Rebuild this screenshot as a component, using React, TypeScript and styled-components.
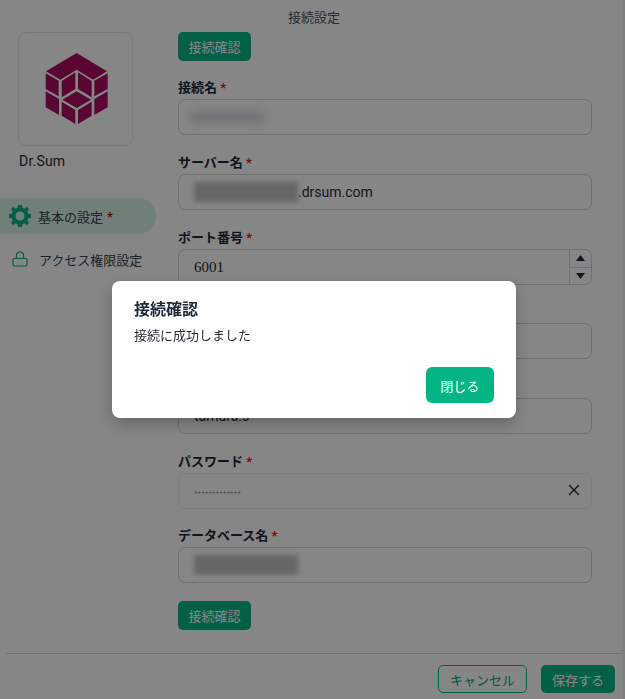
import React from "react";
import styled, { createGlobalStyle } from "styled-components";
import { X } from "lucide-react";

const Global = createGlobalStyle`
  html, body { margin: 0; padding: 0; height: 100%; overflow: hidden; background: #fdfdfd; }
  * { box-sizing: border-box; }
  body { font-family: Roboto, "Noto Sans CJK JP", sans-serif; color: #1f2937; }
`;

const Page = styled.div`
  width: 625px;
  height: 699px;
  display: flex;
  flex-direction: column;
  overflow: hidden;
  border-right: 3px solid #f0f0f2;
`;
const Title = styled.div`
  height: 32px;
  flex: none;
  padding: 9px 0 0 6px;
  text-align: center;
  font-size: 13px;
  line-height: 18px;
  color: #4b5563;
`;
const Body = styled.div`
  flex: 1;
  min-height: 0;
  display: flex;
`;
const Side = styled.aside`
  width: 178px;
  flex: none;
  display: flex;
  flex-direction: column;
`;
const LogoBox = styled.div`
  width: 115px;
  height: 114px;
  margin-left: 18px;
  border: 1px solid #e5e7eb;
  border-radius: 8px;
  display: flex;
  align-items: center;
  justify-content: center;
`;
const Product = styled.div`
  margin: 5px 0 0 19px;
  font-size: 14px;
  line-height: 20px;
  letter-spacing: 0.2px;
  color: #1f2937;
`;
const NavList = styled.nav`
  margin-top: 27px;
  display: flex;
  flex-direction: column;
  gap: 7px;
`;
const NavItem = styled.div<{ $active?: boolean }>`
  width: 156px;
  height: 36px;
  display: flex;
  align-items: center;
  padding-left: ${(p) => (p.$active ? 9 : 12)}px;
  gap: ${(p) => (p.$active ? 7 : 11)}px;
  font-size: 13px;
  color: #374151;
  white-space: nowrap;
  border-radius: 0 18px 18px 0;
  background: ${(p) => (p.$active ? "#d6f0e4" : "transparent")};
`;
const Star = styled.span`
  color: #d92020;
  font-weight: 700;
  font-size: 13px;
`;
const NavStar = styled(Star)`
  margin-left: -3px;
  color: #e00000;
`;
const Main = styled.main`
  width: 414px;
  flex: none;
  display: flex;
  flex-direction: column;
  align-items: stretch;
`;
const GreenButton = styled.button`
  width: 73px;
  height: 29px;
  padding: 0;
  border: none;
  border-radius: 5px;
  background: #03b585;
  color: #fff;
  font: 400 13px "Noto Sans CJK JP", sans-serif;
`;
const Fields = styled.div`
  margin: 20.3px 0 18px;
  display: flex;
  flex-direction: column;
  gap: 20.67px;
`;
const Label = styled.div`
  height: 18px;
  font-size: 13px;
  line-height: 13px;
  font-weight: 700;
  color: #1f2937;
`;
const Control = styled.div<{ $faint?: boolean }>`
  position: relative;
  height: 36px;
  display: flex;
  align-items: center;
  padding-left: 15px;
  border: 1px solid ${(p) => (p.$faint ? "#eceef2" : "#cfd2e0")};
  border-radius: 7px;
  font-size: 14px;
  color: #1f2937;
  overflow: hidden;
`;
const Redacted = styled.span<{ $w: number }>`
  display: inline-block;
  width: ${(p) => p.$w}px;
  height: 20px;
  background: #c2c3c5;
  filter: blur(2px);
`;
const FaintRedacted = styled.span`
  display: inline-block;
  width: 75px;
  height: 12px;
  margin-left: -4px;
  background: #d8d9dc;
  filter: blur(4px);
`;
const Mono = styled.span`
  font-family: "Liberation Serif", serif;
  font-size: 15px;
  padding-top: 2px;
`;
const Dots = styled.span`
  font-family: "Liberation Mono", monospace;
  font-size: 6px;
  color: #777;
  padding-top: 3px;
`;
const Stepper = styled.div`
  position: absolute;
  top: 0;
  right: 0;
  bottom: 0;
  width: 22px;
  display: grid;
  grid-template-rows: 1fr 1fr;
  border-left: 1px solid #cfd2e0;
`;
const StepCell = styled.div`
  display: flex;
  align-items: center;
  justify-content: center;
  & + & { border-top: 1px solid #cfd2e0; }
`;
const Clear = styled.span`
  position: absolute;
  right: 8px;
  top: 7px;
  display: flex;
  color: #1f2937;
`;
const Footer = styled.footer`
  flex: none;
  margin: 0 0 0 6px;
  height: 46px;
  border-top: 1px solid #d4d4d8;
  display: flex;
  justify-content: flex-end;
  align-items: flex-start;
  gap: 14px;
  padding: 11px 7px 0 0;
`;
const OutlineButton = styled.button`
  width: 89px;
  height: 28px;
  padding: 0;
  background: transparent;
  border: 1px solid #03b585;
  border-radius: 5px;
  color: #03a57a;
  font: 400 13px "Noto Sans CJK JP", sans-serif;
`;
const SaveButton = styled(GreenButton)`
  width: 74px;
  height: 28px;
`;
const Overlay = styled.div`
  position: fixed;
  inset: 0;
  padding-left: 3px;
  display: flex;
  align-items: center;
  justify-content: center;
  background: rgba(0, 0, 0, 0.47);
`;
const Dialog = styled.div`
  width: 404px;
  height: 137px;
  background: #fff;
  border-radius: 8px;
  box-shadow: 0 6px 16px rgba(0, 0, 0, 0.25);
  padding: 17px 22px 15px;
  display: flex;
  flex-direction: column;
`;
const DialogTitle = styled.div`
  font-size: 16px;
  line-height: 24px;
  font-weight: 700;
  color: #1f2937;
`;
const DialogText = styled.div`
  margin-top: 4px;
  font-size: 13px;
  line-height: 20px;
  color: #1f2937;
`;
const DialogActions = styled.div`
  margin-top: auto;
  display: flex;
  justify-content: flex-end;
`;
const CloseButton = styled.button`
  width: 68px;
  height: 36px;
  padding: 0;
  border: none;
  border-radius: 6px;
  background: #03b585;
  color: #fff;
  font: 400 13px "Noto Sans CJK JP", sans-serif;
`;

const Logo = () => (
  <svg width="90" height="100" viewBox="0 0 270 300" fill="#ad0c5f">
    <polygon points="137,42 228,97 186,122 137,92 88,122 45,97" />
    <polygon points="44,103 83,125 83,172 44,150" />
    <polygon points="44,157 84,180 84,228 44,205" />
    <polygon points="92,126 133,100 133,150 92,175" />
    <polygon points="141,100 182,126 182,175 141,150" />
    <polygon points="190,125 230,103 230,150 190,172" />
    <polygon points="190,180 230,157 230,205 190,228" />
    <polygon points="137,157 180,182 137,207 94,182" />
    <polygon points="92,188 133,213 133,255 92,230" />
    <polygon points="141,213 182,188 182,230 141,255" />
  </svg>
);

const Gear = () => (
  <svg width="22" height="22" viewBox="0 0 22 22" fill="#03b585">
    <path fillRule="evenodd" d="M9 0h4l.5 3 1.9.8L17.9 2l2.1 2.1-1.8 2.5.8 1.9 3 .5v4l-3 .5-.8 1.9 1.8 2.5-2.1 2.1-2.5-1.8-1.9.8-.5 3H9l-.5-3-1.9-.8L4.1 20 2 17.9l1.8-2.5-.8-1.9-3-.5v-4l3-.5.8-1.9L2 4.1 4.1 2l2.5 1.8 1.9-.8L9 0zm2 6.5a4.5 4.5 0 1 0 0 9 4.5 4.5 0 0 0 0-9z" />
  </svg>
);

const LockIcon = () => (
  <svg width="16" height="16" viewBox="0 0 16 16" fill="none" stroke="#03b585" strokeWidth="1.2">
    <rect x="1" y="7.5" width="14" height="7.5" rx="1.5" />
    <path d="M4.5 7.5V4.5a3.5 3.5 0 0 1 7 0v3" />
  </svg>
);

const Up = () => (
  <svg width="9" height="6" viewBox="0 0 9 6" fill="#1f2937"><polygon points="4.5,0 9,6 0,6" /></svg>
);
const Down = () => (
  <svg width="9" height="6" viewBox="0 0 9 6" fill="#1f2937"><polygon points="0,0 9,0 4.5,6" /></svg>
);

const Req = () => <Star> *</Star>;

export default function App() {
  return (
    <>
      <Global />
      <Page>
        <Title>接続設定</Title>
        <Body>
          <Side>
            <LogoBox><Logo /></LogoBox>
            <Product>Dr.Sum</Product>
            <NavList>
              <NavItem $active><Gear /><span>基本の設定</span><NavStar>*</NavStar></NavItem>
              <NavItem><LockIcon /><span>アクセス権限設定</span></NavItem>
            </NavList>
          </Side>
          <Main>
            <GreenButton>接続確認</GreenButton>
            <Fields>
              <div>
                <Label>接続名<Req /></Label>
                <Control><FaintRedacted /></Control>
              </div>
              <div>
                <Label>サーバー名<Req /></Label>
                <Control><Redacted $w={104} /><span>.drsum.com</span></Control>
              </div>
              <div>
                <Label>ポート番号<Req /></Label>
                <Control>
                  <Mono>6001</Mono>
                  <Stepper><StepCell><Up /></StepCell><StepCell><Down /></StepCell></Stepper>
                </Control>
              </div>
              <div>
                <Label />
                <Control />
              </div>
              <div>
                <Label />
                <Control>tamura.s</Control>
              </div>
              <div>
                <Label>パスワード<Req /></Label>
                <Control $faint>
                  <Dots>+++++++++++++</Dots>
                  <Clear><X size={18} strokeWidth={1.8} /></Clear>
                </Control>
              </div>
              <div>
                <Label>データベース名<Req /></Label>
                <Control><Redacted $w={104} /></Control>
              </div>
            </Fields>
            <GreenButton>接続確認</GreenButton>
          </Main>
        </Body>
        <Footer>
          <OutlineButton>キャンセル</OutlineButton>
          <SaveButton>保存する</SaveButton>
        </Footer>
      </Page>
      <Overlay>
        <Dialog>
          <DialogTitle>接続確認</DialogTitle>
          <DialogText>接続に成功しました</DialogText>
          <DialogActions><CloseButton>閉じる</CloseButton></DialogActions>
        </Dialog>
      </Overlay>
    </>
  );
}
